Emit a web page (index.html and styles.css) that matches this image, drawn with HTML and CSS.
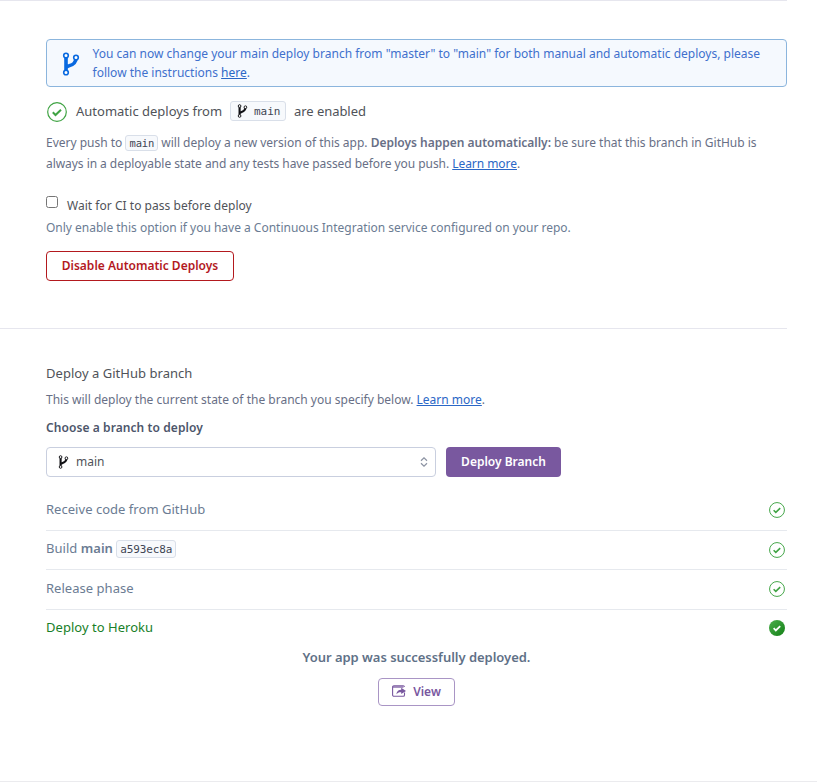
FILE: index.html
```html
<!DOCTYPE html>
<html lang="en">
<head>
<meta charset="utf-8">
<title>Deploy</title>
<link rel="stylesheet" href="styles.css">
</head>
<body>
<svg class="defs" width="0" height="0" aria-hidden="true">
  <defs>
    <symbol id="branch" viewBox="0 0 18 24">
      <path d="M4 4.500V19.500M4 16.500C4 12.500 14 15 14 6" fill="none" stroke="currentColor" stroke-width="3.600"/>
      <g fill="#fff" stroke="currentColor" stroke-width="1.600"><circle cx="4" cy="3.500" r="2.300"/><circle cx="14" cy="5.500" r="2.300"/><circle cx="4" cy="20.500" r="2.300"/></g>
    </symbol>
    <symbol id="check" viewBox="0 0 20 20">
      <circle cx="10" cy="10" r="9.300" fill="none" stroke="currentColor" stroke-width="1.200"/>
      <path d="M5.800 10.300l2.700 2.700 5.500-5.300" fill="none" stroke="currentColor" stroke-width="2"/>
    </symbol>
  </defs>
</svg>
<section class="section auto">
  <div class="notice">
    <svg class="notice-icon"><use href="#branch"/></svg>
    <p><span class="n1">You can now change your main deploy branch from "master" to "main" for both manual and automatic deploys, please</span><br><span class="n2">follow the instructions <a href="#">here</a>.</span></p>
  </div>
  <div class="status">
    <svg class="status-check"><use href="#check"/></svg>
    <span class="s1">Automatic deploys from</span>
    <code class="chip"><svg class="mini"><use href="#branch"/></svg>main</code>
    <span class="s2">are enabled</span>
  </div>
  <p class="desc"><span class="d1">Every push to <code class="code">main</code> will deploy a new version of this app. <b>Deploys happen automatically:</b> be sure that this branch in GitHub is</span><br><span class="d2">always in a deployable state and any tests have passed before you push. <a href="#">Learn more</a>.</span></p>
  <label class="ci"><input type="checkbox"><span>Wait for CI to pass before deploy</span></label>
  <p class="hint">Only enable this option if you have a Continuous Integration service configured on your repo.</p>
  <button class="btn danger">Disable Automatic Deploys</button>
</section>
<section class="section manual">
  <h2>Deploy a GitHub branch</h2>
  <p class="sub">This will deploy the current state of the branch you specify below. <a href="#">Learn more</a>.</p>
  <h3>Choose a branch to deploy</h3>
  <div class="form">
    <div class="select"><svg class="mini"><use href="#branch"/></svg><span>main</span>
      <svg class="arrows" viewBox="0 0 8 10"><path d="M1 3.700L4 .8l3 2.900M1 6.300l3 2.900 3-2.900" fill="none" stroke="#8c93a3" stroke-width="1.200"/></svg>
    </div>
    <button class="btn primary">Deploy Branch</button>
  </div>
  <ul class="steps">
    <li><span class="r1">Receive code from GitHub</span><svg><use href="#check"/></svg></li>
    <li><span>Build <b>main</b> <code class="code hash">a593ec8a</code></span><svg><use href="#check"/></svg></li>
    <li><span>Release phase</span><svg><use href="#check"/></svg></li>
    <li class="done"><span>Deploy to Heroku</span><svg viewBox="0 0 20 20"><defs><linearGradient id="g" x1="0" y1="0" x2="1" y2="1"><stop stop-color="#4cae4c"/><stop offset="1" stop-color="#138016"/></linearGradient></defs><circle cx="10" cy="10" r="10" fill="url(#g)"/><path d="M5.800 10.300l2.700 2.700 5.500-5.300" fill="none" stroke="#fff" stroke-width="2.200"/></svg></li>
  </ul>
  <p class="success">Your app was successfully deployed.</p>
  <button class="btn view"><svg viewBox="0 0 14 12"><path d="M12.500 7.500V10a1.300 1.300 0 0 1-1.300 1.300H1.900A1.300 1.300 0 0 1 .6 10V2A1.300 1.300 0 0 1 1.900.7h9.300a1.300 1.300 0 0 1 1.300 1.100" fill="none" stroke="currentColor" stroke-width="1.100"/><path d="M1 2h10.500" stroke="currentColor" stroke-width="1.300"/><path d="M4.300 9.300C4.800 6 6.700 4.700 9.200 4.700V2.800L14 6 9.200 9V7.200C7 7.100 5.600 7.700 4.300 9.300Z" fill="currentColor"/></svg><span>View</span></button>
</section>
</body>
</html>
```
FILE: styles.css
```css
* { box-sizing: border-box; }
body { margin: 0; height: 782px; overflow: hidden; background: #fff; border-bottom: 1px solid #ebebee; font: 12px/19px "Noto Sans", sans-serif; letter-spacing: .005px; color: #686f86; }
p, h2, h3, ul { margin: 0; padding: 0; }
a { color: #2b67c6; text-underline-offset: 1px; }
b { font-weight: 600; }
svg { display: block; flex: none; }
.defs { position: absolute; }
p, h2, h3, .s1, .s2, li span { white-space: nowrap; }
.section { width: 787px; padding: 0 0 0 46px; border-top: 1px solid #e6e6ee; }
.auto { height: 328px; padding-top: 38px; }
.manual { padding-top: 34px; }
.notice { height: 48px; border: 1px solid #8bb5dd; border-radius: 4px; background: #f5f9fe; color: #4070cd; display: flex; padding: 4px 0 0 15px; }
.notice-icon { width: 18px; height: 24px; margin: 8px 12.500px 0 0; color: #0869e0; }
.status { display: flex; align-items: center; height: 22px; margin-top: 13px; font-size: 13px; letter-spacing: 0; color: #505359; }
.status-check { width: 20px; height: 20px; margin: 1px 9px 0 1px; color: #3fa343; }
.s1 { width: 147px; }
.s2 { letter-spacing: -.05px; }
.chip { display: flex; align-items: center; width: 56px; height: 20px; margin: 0 8px 0 7px; padding-left: 6px; border: 1px solid #d9dfe9; border-radius: 3px; background: #f7f9fc; color: #3f4553; font: 11px "DejaVu Sans Mono", monospace; }
.mini { width: 11px; height: 14px; color: #101014; margin-right: 6px; }
.code { display: inline-block; height: 16px; padding: 0 3px; border: 1px solid #d9dfe9; border-radius: 3px; background: #f7f9fc; color: #3f4553; font: 10.500px/15px "DejaVu Sans Mono", monospace; letter-spacing: -.15px; }
.desc { margin-top: 10px; line-height: 21px; }
.d1 { letter-spacing: -.005px; }
.d2 { letter-spacing: -.05px; }
.ci { display: flex; height: 20px; margin-top: 22px; color: #505359; letter-spacing: .03px; }
.ci input { width: 12px; height: 12px; margin: 0 9px 0 0; }
.ci span { line-height: 19px; }
.hint { margin-top: 2px; color: #6b7c93; letter-spacing: -.01px; }
.btn { display: flex; align-items: center; justify-content: center; height: 30px; padding: 0 0 1px; border-radius: 4px; font: 600 12px "Noto Sans", sans-serif; letter-spacing: 0; white-space: nowrap; }
.danger { width: 188px; margin-top: 14px; background: #fff; border: 1px solid #b3191e; color: #b3191e; }
h2 { font-size: 13px; letter-spacing: .03px; font-weight: 400; color: #505359; line-height: 20px; }
.sub { margin-top: 7px; }
h3 { margin-top: 9px; font-size: 12px; line-height: 19px; font-weight: 600; letter-spacing: .08px; color: #4d566b; }
.form { display: flex; gap: 10px; margin-top: 10px; }
.select { display: flex; align-items: center; width: 390px; height: 30px; padding: 0 7px 0 11px; border: 1px solid #c9cfdf; border-radius: 4px; color: #505359; }
.select .mini { margin-right: 7px; }
.select span { padding-bottom: 1px; }
.arrows { width: 8px; height: 10px; margin-left: auto; }
.primary { width: 115px; background: #79589f; border: 0; color: #fff; }
.steps { list-style: none; margin-top: 14px; }
.steps li { display: flex; align-items: center; justify-content: space-between; height: 39.500px; padding-bottom: 2px; border-bottom: 1px solid #e6e9ee; font-size: 13px; letter-spacing: .03px; color: #6b7c93; }
.steps svg { width: 16px; height: 16px; margin: 2px 2px 0 0; color: #3fa343; }
.steps .done { border: 0; height: 37px; color: #188029; }
.steps .hash { height: 18px; line-height: 17px; font-size: 11px; letter-spacing: -.15px; }
.success { text-align: center; font-weight: 600; font-size: 13px; letter-spacing: -.03px; margin-top: 1px; color: #5f7187; }
.view { width: 77px; height: 28px; margin: 11px auto 0; background: #fff; border: 1px solid #a995c5; color: #79589f; }
.view svg { width: 14px; height: 12px; margin-right: 7px; }
```
